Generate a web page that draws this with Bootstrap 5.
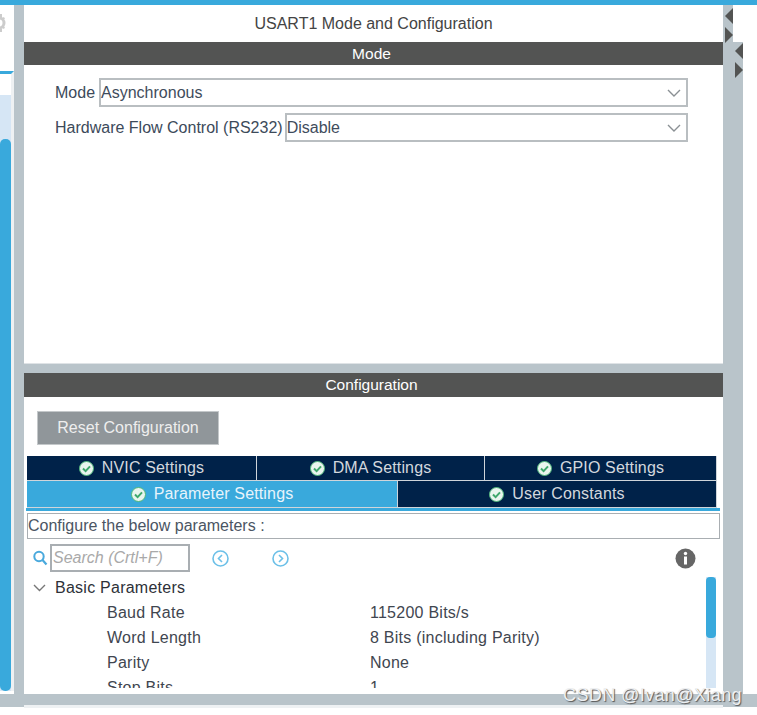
<!DOCTYPE html>
<html lang="en">
<head>
  <meta charset="UTF-8">
  <title>USART1 Mode and Configuration</title>
  <link href="https://cdn.jsdelivr.net/npm/bootstrap@5.3.0/dist/css/bootstrap.min.css" rel="stylesheet">
  <style>
    html, body { height: 715px; overflow: hidden; background: #fff; }
    body { font-family: "Liberation Sans", Arial, sans-serif; font-size: 16px; color: #3c4a5a; position: relative; }
    .top-stripe { height: 5px; background: #39a9dc; }
    .work-row { height: 689px; }
    .side-left { width: 14px; }
    .side-gear { height: 66px; padding-top: 9px; }
    .side-track { height: 620px; border-top: 3px solid #39a9dc; background: #d6e6f5; border-right: 3px solid #eef1f3; }
    .side-blank { height: 21px; background: #fff; }
    .side-thumb { margin-top: 44px; height: 552px; background: #39a9dc; border-radius: 5px; width: 11px; }
    .gray-split { width: 10px; background: #b9c4ca; }
    .main-pane { width: 699px; }
    .pane-title { height: 37px; line-height: 37px; text-align: center; color: #444; }
    .pane-head { height: 24px; line-height: 23px; background: #535453; color: #fff; text-align: center; font-size: 15.5px; padding-right: 4px; }
    .head-mode { height: 23px; }
    .mode-body { height: 298px; padding: 13px 35px 0 31px; }
    .field-row { height: 29px; margin-bottom: 6px; line-height: 29px; }
    .label-tight { margin-right: 2px; }
    .pick-box { height: 29px; border: 2px solid #b9bec1; padding-left: 0; line-height: 23px; color: #3f4c5c; }
    .pick-arrow { margin-right: 5px; }
    .pane-gap { height: 10px; background: #b9c4ca; border-top: 1px solid #dfe3e6; }
    .cfg-body { height: 294px; }
    .reset-btn { width: 182px; height: 34px; margin: 14px 0 11px 13px; background: #90969a; border: 1px solid #c4c8ca; color: #eee; text-align: center; line-height: 32px; }
    .tab-row { margin-left: 3px; width: 690px; height: 25px; }
    .tab-row-low { height: 27px; }
    .tab-item { background: #002249; color: #d3d8de; line-height: 24px; letter-spacing: .15px; border-right: 1px solid #cfd5da; border-bottom: 1px solid #cfd5da; gap: 8px; }
    .tab-nvic { width: 230px; }
    .tab-dma { width: 228px; }
    .tab-gpio { width: 232px; }
    .tab-param { width: 371px; }
    .tab-user { width: 319px; }
    .tab-on { background: #39a9dc; color: #e8f4fb; }
    .tab-rule { height: 3px; width: 694px; margin-left: 2px; background: #39a9dc; }
    .config-note { height: 26px; width: 693px; margin: 2px 0 0 3px; border: 1px solid #a9aeb2; line-height: 24px; color: #4b5563; }
    .search-row { height: 36px; margin-left: 9px; padding: 5px 0 3px; }
    .search-box { width: 140px; height: 28px; border: 2px solid #a9aeb2; color: #a9a9a9; font-style: italic; line-height: 24px; padding-left: 1px; margin-left: 2px; }
    .nav-back { margin-left: 22px; }
    .nav-next { margin-left: 43px; }
    .info-mark { margin-left: 386px; }
    .param-wrap { height: 113px; overflow: hidden; position: relative; letter-spacing: .25px; }
    .group-row { height: 25px; line-height: 23px; color: #2d3138; margin-left: 9px; gap: 9px; }
    .param-row { height: 25px; line-height: 25px; color: #3f4650; }
    .param-name { width: 346px; padding-left: 83px; }
    .v-track { position: absolute; right: 7px; top: 2px; bottom: 0; width: 10px; background: #d6e6f5; }
    .v-thumb { height: 61px; background: #39a9dc; border-radius: 4px; }
    .pane-foot { height: 3px; background: #eef1f3; }
    .side-right { width: 20px; }
    .bottom-bar { height: 13px; background: #b9c4ca; }
    .watermark { position: absolute; right: 15px; top: 682px; font-size: 18px; letter-spacing: .4px; color: #eef0f2; text-shadow: 1px 1px 1px #555; }
    .tri { display: block; }
    .tri-a { margin-top: 3px; }
    .tri-b { margin-top: 3px; }
    .right-gutter { margin-top: 37px; }
    .tri-c { margin-top: 1px; }
  </style>
</head>
<body>
  <div class="top-stripe"></div>
  <div class="d-flex work-row">
    <div class="side-left">
      <div class="side-gear"><svg class="d-block" width="6" height="18" viewBox="0 0 6 18"><circle cx="-1" cy="9" r="5" fill="none" stroke="#ccc" stroke-width="3"/><path d="M0 0h2v3H0zM0 15h2v3H0zM3 3l2 1-1 2-2-1zM3 15l2-1-1-2-2 1z" fill="#ccc"/></svg></div>
      <div class="side-track"><div class="side-blank"></div><div class="side-thumb"></div></div>
    </div>
    <div class="gray-split"></div>
    <div class="main-pane">
      <div class="pane-title">USART1 Mode and Configuration</div>
      <div class="pane-head head-mode">Mode</div>
      <div class="mode-body">
        <div class="d-flex field-row">
          <span class="me-1">Mode</span>
          <div class="pick-box flex-grow-1 d-flex justify-content-between align-items-center"><span>Asynchronous</span>
            <svg class="pick-arrow" width="14" height="8" viewBox="0 0 14 8"><path d="M1 1l6 6 6-6" fill="none" stroke="#8a9094" stroke-width="1.4"/></svg></div>
        </div>
        <div class="d-flex field-row">
          <span class="label-tight">Hardware Flow Control (RS232)</span>
          <div class="pick-box flex-grow-1 d-flex justify-content-between align-items-center"><span>Disable</span>
            <svg class="pick-arrow" width="14" height="8" viewBox="0 0 14 8"><path d="M1 1l6 6 6-6" fill="none" stroke="#8a9094" stroke-width="1.4"/></svg></div>
        </div>
      </div>
      <div class="pane-gap"></div>
      <div class="pane-head">Configuration</div>
      <div class="cfg-body">
        <div class="reset-btn">Reset Configuration</div>
        <div class="d-flex tab-row">
          <div class="tab-item tab-nvic d-flex justify-content-center align-items-center"><svg width="15" height="15" viewBox="0 0 15 15"><circle cx="7.500" cy="7.500" r="7" fill="#e9f5ee" stroke="#4fb67a"/><path d="M4 7.500l2.600 2.600L11 5.400" fill="none" stroke="#3fa86c" stroke-width="2"/></svg>NVIC Settings</div>
          <div class="tab-item tab-dma d-flex justify-content-center align-items-center"><svg width="15" height="15" viewBox="0 0 15 15"><circle cx="7.500" cy="7.500" r="7" fill="#e9f5ee" stroke="#4fb67a"/><path d="M4 7.500l2.600 2.600L11 5.400" fill="none" stroke="#3fa86c" stroke-width="2"/></svg>DMA Settings</div>
          <div class="tab-item tab-gpio d-flex justify-content-center align-items-center"><svg width="15" height="15" viewBox="0 0 15 15"><circle cx="7.500" cy="7.500" r="7" fill="#e9f5ee" stroke="#4fb67a"/><path d="M4 7.500l2.600 2.600L11 5.400" fill="none" stroke="#3fa86c" stroke-width="2"/></svg>GPIO Settings</div>
        </div>
        <div class="d-flex tab-row tab-row-low">
          <div class="tab-item tab-on tab-param d-flex justify-content-center align-items-center"><svg width="15" height="15" viewBox="0 0 15 15"><circle cx="7.500" cy="7.500" r="7" fill="#e9f5ee" stroke="#4fb67a"/><path d="M4 7.500l2.600 2.600L11 5.400" fill="none" stroke="#3fa86c" stroke-width="2"/></svg>Parameter Settings</div>
          <div class="tab-item tab-user d-flex justify-content-center align-items-center"><svg width="15" height="15" viewBox="0 0 15 15"><circle cx="7.500" cy="7.500" r="7" fill="#e9f5ee" stroke="#4fb67a"/><path d="M4 7.500l2.600 2.600L11 5.400" fill="none" stroke="#3fa86c" stroke-width="2"/></svg>User Constants</div>
        </div>
        <div class="tab-rule"></div>
        <div class="config-note">Configure the below parameters :</div>
        <div class="d-flex align-items-center search-row">
          <svg width="15" height="16" viewBox="0 0 15 16"><circle cx="6" cy="6.500" r="4.700" fill="none" stroke="#49a9dd" stroke-width="2"/><path d="M9.500 10l4 4.500" stroke="#49a9dd" stroke-width="2.200"/></svg>
          <div class="search-box">Search (Crtl+F)</div>
          <svg class="nav-back" width="17" height="17" viewBox="0 0 17 17"><circle cx="8.500" cy="8.500" r="7.500" fill="none" stroke="#6cc0e8" stroke-width="1.600"/><path d="M10 5l-3.500 3.500L10 12" fill="none" stroke="#6cc0e8" stroke-width="1.600"/></svg>
          <svg class="nav-next" width="17" height="17" viewBox="0 0 17 17"><circle cx="8.500" cy="8.500" r="7.500" fill="none" stroke="#6cc0e8" stroke-width="1.600"/><path d="M7 5l3.500 3.500L7 12" fill="none" stroke="#6cc0e8" stroke-width="1.600"/></svg>
          <svg class="info-mark" width="21" height="21" viewBox="0 0 21 21"><circle cx="10.500" cy="10.500" r="10" fill="#666"/><circle cx="10.500" cy="5.500" r="1.700" fill="#fff"/><rect x="9" y="8.500" width="3" height="8" fill="#fff"/></svg>
        </div>
        <div class="param-wrap">
          <div class="d-flex align-items-center group-row"><svg width="13" height="8" viewBox="0 0 13 8"><path d="M1 1l5.500 5.500L12 1" fill="none" stroke="#777" stroke-width="1.400"/></svg>Basic Parameters</div>
          <div class="d-flex param-row"><div class="param-name">Baud Rate</div><div>115200 Bits/s</div></div>
          <div class="d-flex param-row"><div class="param-name">Word Length</div><div>8 Bits (including Parity)</div></div>
          <div class="d-flex param-row"><div class="param-name">Parity</div><div>None</div></div>
          <div class="d-flex param-row"><div class="param-name">Stop Bits</div><div>1</div></div>
          <div class="v-track"><div class="v-thumb"></div></div>
        </div>
      </div>
      <div class="pane-foot"></div>
    </div>
    <div class="side-right d-flex">
      <div class="gray-split d-flex flex-column">
        <svg class="tri tri-a" width="10" height="16" viewBox="0 0 10 16"><path d="M10 0v16L2 8z" fill="#535453"/></svg>
        <svg class="tri tri-b" width="10" height="16" viewBox="0 0 10 16"><path d="M2 0v16l8-8z" fill="#535453"/></svg>
      </div>
      <div class="gray-split d-flex flex-column right-gutter">
        <svg class="tri tri-c" width="10" height="16" viewBox="0 0 10 16"><path d="M10 0v16L2 8z" fill="#535453"/></svg>
        <svg class="tri tri-b" width="10" height="16" viewBox="0 0 10 16"><path d="M2 0v16l8-8z" fill="#535453"/></svg>
      </div>
    </div>
  </div>
  <div class="bottom-bar"></div>
  <div class="watermark">CSDN @Ivan@Xiang</div>
</body>
</html>
